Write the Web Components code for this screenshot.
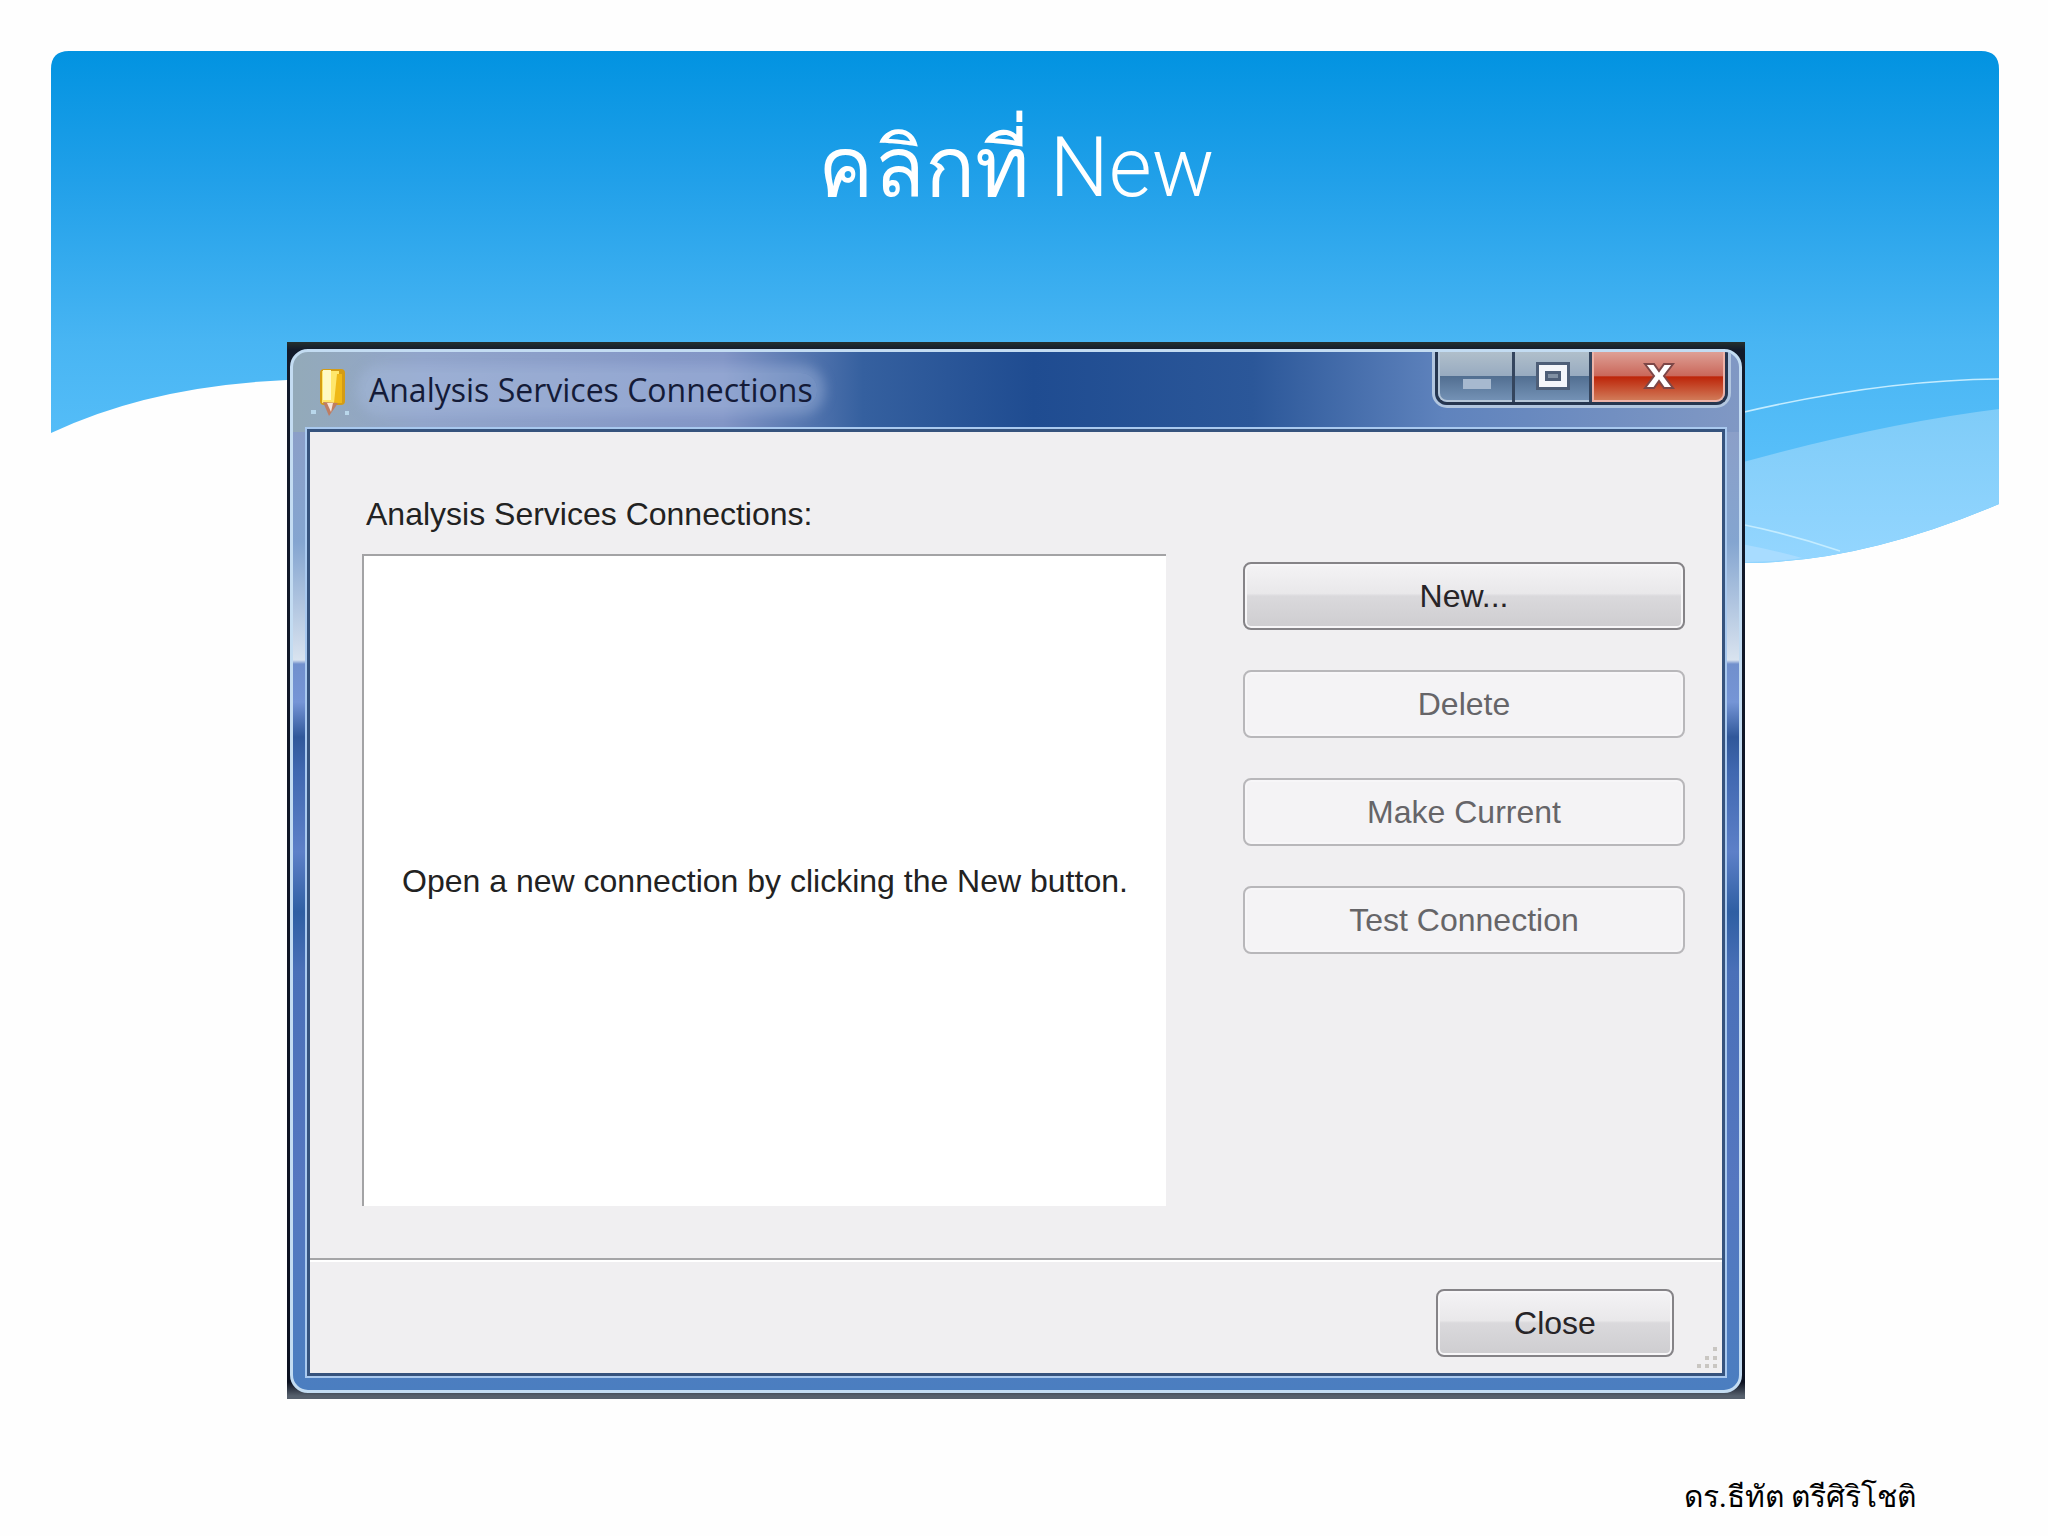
<!DOCTYPE html>
<html lang="th">
<head>
<meta charset="UTF-8">
<meta name="viewport" content="width=device-width, initial-scale=1">
<title>คลิกที่ New</title>
<style>
    body { margin: 0; background: #fefefe; }
</style>
</head>
<body>
<training-slide>
    <span slot="title">คลิกที่ New</span>
    <aero-window caption="Analysis Services Connections">
        <connection-panel></connection-panel>
    </aero-window>
    <span slot="author">ดร.ธีทัต ตรีศิริโชติ</span>
</training-slide>

<script>
class TrainingSlide extends HTMLElement {
    constructor() {
        super();
        this.attachShadow({ mode: 'open' });
    }

    connectedCallback() {
        this.shadowRoot.innerHTML = `
            <style>
                :host { display: grid; grid-template-columns: 100%; min-height: 100vh; overflow: hidden; }
                .backdrop, .content { grid-area: 1 / 1; }
                .backdrop { display: block; width: 100%; height: 608px; }
                .content { display: flex; flex-direction: column; position: relative; box-sizing: border-box; padding: 64px 303px 8px 287px; }
                h1 { margin: 0; height: 278px; line-height: 208px; text-align: center; font-family: Roboto, "Noto Sans", sans-serif; font-size: 83px; font-weight: 300; color: #fff; }
                footer { margin: 74px -171px 0 0; text-align: right; font-family: "Kinnari", "Norasi", "Liberation Serif", serif; font-size: 30px; line-height: 48px; color: #000; }
            </style>
            <svg class="backdrop" viewBox="0 0 2048 608" preserveAspectRatio="none" aria-hidden="true">
                <defs>
                    <linearGradient id="sky" gradientUnits="userSpaceOnUse" x1="0" y1="51" x2="0" y2="570">
                        <stop offset="0" stop-color="#0293e1"/>
                        <stop offset=".25" stop-color="#21a0e9"/>
                        <stop offset=".56" stop-color="#48b5f3"/>
                        <stop offset="1" stop-color="#66c8ff"/>
                    </linearGradient>
                    <linearGradient id="haze" x1="0" y1="0" x2="0" y2="1">
                        <stop offset="0" stop-color="#7fccf8"/>
                        <stop offset="1" stop-color="#94d6ff"/>
                    </linearGradient>
                </defs>
                <path fill="url(#sky)" d="M51 69Q51 51 69 51H1981Q1999 51 1999 69V504Q1860 563 1745 563C1300 563 760 380 287 380Q150 386 51 433Z"/>
                <path fill="url(#haze)" d="M1600 505Q1830 430 1999 409V504Q1860 563 1745 563Q1680 560 1600 550Z"/>
                <path fill="#a8dcff" d="M1700 537Q1760 546 1802 558Q1770 563 1700 562Z"/>
                <path fill="none" stroke="#c4ecff" stroke-width="1.5" d="M1740 413Q1880 380 1999 379M1740 524Q1790 534 1840 551"/>
            </svg>
            <div class="content">
                <h1><slot name="title"></slot></h1>
                <slot></slot>
                <footer><slot name="author"></slot></footer>
            </div>
        `;
    }
}

class AeroWindow extends HTMLElement {
    constructor() {
        super();
        this.attachShadow({ mode: 'open' });
    }

    connectedCallback() {
        const caption = this.getAttribute('caption') || '';
        this.shadowRoot.innerHTML = `
            <style>
                :host { display: block; padding: 7px 3px 6px; background: linear-gradient(#25302f 0, #121a2b 8px, #0b1020 1040px, #56606d 1054px); }
                .frame { border: 3px solid #c3dcf2; border-radius: 18px; padding: 0 14px 14px; overflow: hidden;
                    background:
                        linear-gradient(90deg, #93aab9 0, #92a5cb 130px, #8295c6 430px, #35609f 570px, #1f4c91 740px, #2b5799 960px, #5f83bd 1150px, #8098c4 100%) 0 0 / 100% 80px no-repeat,
                        linear-gradient(#8b9fc8 80px, #84a5d0 190px, #d9e3ef 308px, #7190cd 312px, #7595d6 350px, #30589a 385px, #4068b0 420px, #5d80c8 500px, #2f5fa3 560px, #4a70b8 620px, #5577c0 80%, #4b7ec0 100%); }
                header { display: flex; align-items: flex-start; height: 77px; }
                .icon { width: 42px; height: 56px; margin: 12px 14px 0 2px; flex: none; }
                h2 { margin: 21px 0 0; padding: 0 4px; border-radius: 16px; font-family: "Open Sans", sans-serif; font-size: 32px; font-weight: 400; line-height: 34px; color: #141b38; white-space: nowrap; background: rgba(170, 190, 226, .4); box-shadow: 0 0 12px 8px rgba(170, 190, 226, .4); }
                .controls { display: flex; margin-left: auto; margin-right: -3px; border: 3px solid #26364f; border-top: 0; border-radius: 0 0 12px 12px; box-shadow: 0 0 0 3px #b2c6df; }
                .controls button { box-sizing: border-box; display: grid; place-items: center; width: 77px; height: 50px; padding: 0; border: 2px solid #b5c6d8; border-top: 0; background: linear-gradient(#b0bfcb, #98abc0 49%, #526f91 51%, #7391b5); }
                .controls button + button { border-left: 0; box-shadow: -3px 0 0 #34455e; }
                .controls button:first-child { border-radius: 0 0 0 9px; }
                .controls button:last-child { width: 133px; border: 2px solid #edb3a8; border-top: 0; border-radius: 0 0 9px 0; background: linear-gradient(#dea096, #ca685b 49%, #bd2509 52%, #d17a58); }
                .client { border: 3px solid #36537d; box-shadow: 0 0 0 2px #a9c9ef; background: #f0eff1; }
            </style>
            <div class="frame">
                <header>
                    <svg class="icon" viewBox="0 0 42 56" aria-hidden="true">
                        <rect x="11" y="5" width="25" height="36" rx="4" fill="#d49c15"/>
                        <rect x="13" y="7" width="17" height="32" fill="#ffe76c"/>
                        <rect x="14" y="6" width="8" height="30" fill="#fff9c5"/>
                        <path d="M28 10h5v29h-8z" fill="#efb817"/>
                        <path d="M14 38l6 14 9-13z" fill="#be7d62"/>
                        <path d="M18 39l4 9 2-9z" fill="#f5e5dc"/>
                        <path d="M2 46h5v4H2zM36 47h4v4h-4z" fill="#b9d7eb"/>
                    </svg>
                    <h2>${caption}</h2>
                    <div class="controls">
                        <button type="button" aria-label="Minimize">
                            <svg width="32" height="28" viewBox="0 0 32 28"><path fill="#a7b9cf" d="M2 17h28v10H2z"/></svg>
                        </button>
                        <button type="button" aria-label="Maximize">
                            <svg width="36" height="28" viewBox="0 0 36 28"><path fill="#4e5e77" d="M1 0h34v28H1z"/><path fill="#f5f6fa" fill-rule="evenodd" d="M4 3h28v22H4zM10 9v10h16V9z"/><path fill="#8190a3" d="M13 12h10v4H13z"/></svg>
                        </button>
                        <button type="button" aria-label="Close">
                            <svg width="32" height="28" viewBox="0 0 32 28"><path fill="#fff" stroke="#7d4747" stroke-width="2" d="M2 2h9l5 7 5-7h9l-9 12 9 12h-9l-5-7-5 7H2l9-12z"/></svg>
                        </button>
                    </div>
                </header>
                <div class="client"><slot></slot></div>
            </div>
        `;
    }
}

class ConnectionPanel extends HTMLElement {
    constructor() {
        super();
        this.attachShadow({ mode: 'open' });
    }

    connectedCallback() {
        this.shadowRoot.innerHTML = `
            <style>
                :host { display: block; font-family: "Liberation Sans", Arial, sans-serif; font-size: 32px; line-height: 36px; color: #222; }
                .main { display: grid; grid-template-columns: 1fr 442px; column-gap: 77px; padding: 64px 37px 52px 52px; }
                .label { grid-column: 1 / -1; margin: 0 0 22px 4px; }
                .list { box-sizing: border-box; display: grid; place-items: center; min-height: 652px; border: solid #a3a3a5; border-width: 2px 0 0 2px; background: #fff; white-space: nowrap; }
                .list p { margin: 0; }
                .actions { display: flex; flex-direction: column; gap: 40px; padding-top: 8px; }
                .bottom { display: flex; justify-content: flex-end; align-items: flex-end; height: 115px; box-sizing: border-box; padding: 0 3px 4px 0; border-top: 2px solid #a5a5a7; box-shadow: inset 0 2px 0 #fff; }
                .bottom aero-button { width: 238px; margin: 0 23px 12px 0; }
                .grip { width: 22px; height: 22px; }
            </style>
            <div class="main">
                <div class="label" id="connections-label">Analysis Services Connections:</div>
                <section class="list" aria-labelledby="connections-label">
                    <p>Open a new connection by clicking the New button.</p>
                </section>
                <div class="actions">
                    <aero-button>New...</aero-button>
                    <aero-button disabled>Delete</aero-button>
                    <aero-button disabled>Make Current</aero-button>
                    <aero-button disabled>Test Connection</aero-button>
                </div>
            </div>
            <div class="bottom">
                <aero-button>Close</aero-button>
                <svg class="grip" viewBox="0 0 22 22" aria-hidden="true"><path fill="#c9c6c2" d="M16 0h4v4h-4zM8 9h4v4H8zM16 9h4v4h-4zM0 17h4v4H0zM8 17h4v4H8zM16 17h4v4h-4z"/></svg>
            </div>
        `;
    }
}

class AeroButton extends HTMLElement {
    constructor() {
        super();
        this.attachShadow({ mode: 'open' });
    }

    connectedCallback() {
        const disabled = this.hasAttribute('disabled') ? 'disabled' : '';
        this.shadowRoot.innerHTML = `
            <style>
                :host { display: block; }
                button { display: block; box-sizing: border-box; width: 100%; height: 68px; padding: 0; border: 2px solid #858387; border-radius: 8px; background: linear-gradient(#f4f3f5, #e9e8ea 46%, #dad9dc 50%, #cecdd0); box-shadow: inset 0 0 0 2px #f7f6f8; font: inherit; color: #272427; }
                button:disabled { border-color: #b8b7ba; background: #f4f3f5; color: #666568; }
            </style>
            <button type="button" ${disabled}><slot></slot></button>
        `;
    }
}

customElements.define('aero-button', AeroButton);
customElements.define('connection-panel', ConnectionPanel);
customElements.define('aero-window', AeroWindow);
customElements.define('training-slide', TrainingSlide);
</script>
</body>
</html>
